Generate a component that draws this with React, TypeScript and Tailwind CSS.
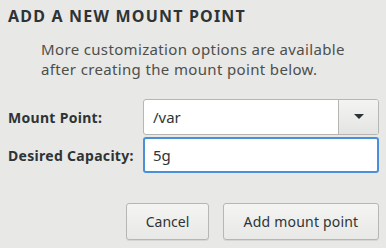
import React from "react";

export default function App() {
  return (
    <div className="w-[386px] h-[248px] bg-[#e8e8e7] overflow-hidden relative" style={{ fontFamily: '"Noto Sans", "Open Sans", sans-serif' }}>
      <div className="pl-[8px] pt-[6px]">
        <div className="text-[16px] leading-[20px] font-bold text-[#2e3436] tracking-[1.2px]">ADD A NEW MOUNT POINT</div>
      </div>
      <div className="pl-[41px] pt-[13px] text-[15px] leading-[20px] text-[#4d4f4b] tracking-[0.35px]">
        <div>More customization options are available</div>
        <div>after creating the mount point below.</div>
      </div>
      <div className="mt-[20px] flex flex-col gap-[2px] pr-[7px]">
        <div className="flex items-center">
          <div className="w-[143px] pl-[8px] text-[14px] font-bold text-[#2e3436] tracking-[0.3px]">Mount Point:</div>
          <div className="flex-1 h-[36px] flex border border-[#b6b6b3] rounded-[3px] bg-white overflow-hidden">
            <div className="flex-1 pl-[9px] flex items-center text-[15px] text-[#2e3436]">/var</div>
            <div className="w-[40px] border-l border-[#b6b6b3] bg-gradient-to-b from-[#f4f4f2] to-[#e4e4e2] flex items-center justify-center">
              <svg width="10" height="6" viewBox="0 0 10 6"><path d="M0 0 L10 0 L5 5 Z" fill="#2e3436" /></svg>
            </div>
          </div>
        </div>
        <div className="flex items-center">
          <div className="w-[143px] pl-[8px] text-[14px] font-bold text-[#2e3436] tracking-[0.3px]">Desired Capacity:</div>
          <div className="flex-1 h-[36px] flex items-center border-2 border-[#4a90d9] rounded-[3px] bg-white pl-[8px] text-[15px] text-[#2e3436]">5g</div>
        </div>
      </div>
      <div className="flex justify-end gap-[14px] pr-[7px] mt-[30px]">
        <button className="w-[83px] h-[37px] rounded-[3px] border border-[#b6b6b3] bg-gradient-to-b from-[#f4f4f2] to-[#e8e8e6] shadow-[0_1px_0_rgba(0,0,0,0.08)] text-[14px] text-[#2e3436]">Cancel</button>
        <button className="w-[156px] h-[37px] rounded-[3px] border border-[#b6b6b3] bg-gradient-to-b from-[#f4f4f2] to-[#e8e8e6] shadow-[0_1px_0_rgba(0,0,0,0.08)] text-[14px] text-[#2e3436] tracking-[0.2px]">Add mount point</button>
      </div>
    </div>
  );
}
